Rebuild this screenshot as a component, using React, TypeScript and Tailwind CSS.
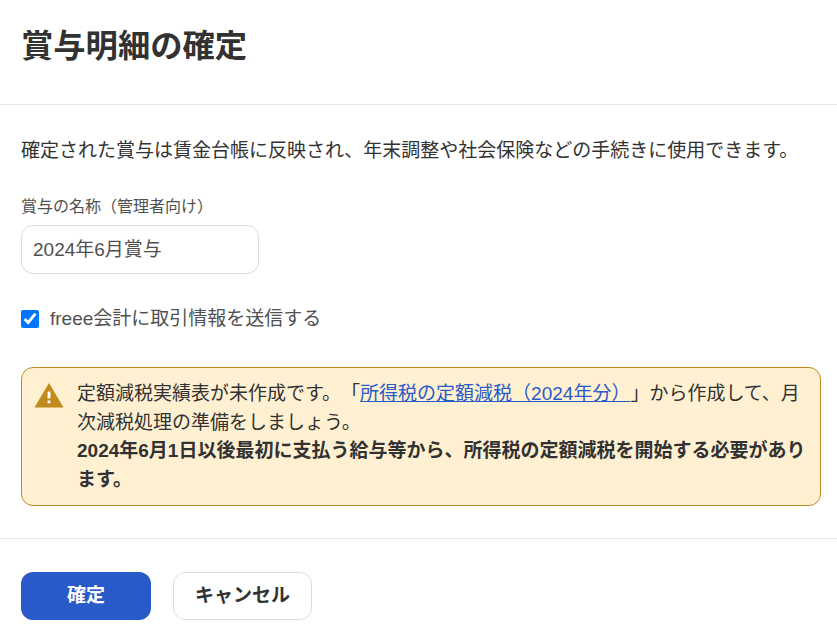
const FONT = "font-['Liberation_Sans','Noto_Sans_CJK_JP',sans-serif]";

const App = () => {
  return (
    <div className={`${FONT} h-[638px] w-[837px] overflow-hidden bg-white text-[#323232] [text-spacing-trim:space-all]`}>
      <div className="flex h-[105px] items-start border-b border-[#e8e8e8] px-[21px] pt-[22px]">
        <h1 className="text-[32.3px] font-bold leading-[48px]">賞与明細の確定</h1>
      </div>
      <div className="px-[21px] pt-[32px]">
        <p className="text-[19px] leading-[28.5px]">
          確定された賞与は賃金台帳に反映され、年末調整や社会保険などの手続きに使用できます。
        </p>
        <label className="mt-[29px] block text-[16px] leading-[24px] text-[#505050]">
          賞与の名称（管理者向け）
        </label>
        <input
          readOnly
          value="2024年6月賞与"
          className="mt-[6px] block h-[49px] w-[238px] rounded-[12px] border border-[#dcdcdc] px-[11px] pb-[4px] text-[19px] text-[#505050] outline-none"
        />
        <label className="mt-[31px] flex items-center gap-[11px] text-[19px] leading-[28.5px] text-[#505050]">
          <input type="checkbox" readOnly checked className="h-[18px] w-[18px] accent-[#0075ff]" />
          freee会計に取引情報を送信する
        </label>
        <div className="mt-[34px] flex w-[800px] gap-[13px] rounded-[12px] border border-[#c08a20] bg-[#fff0d2] pt-[12px] pb-[11px] pl-[12px] pr-[12px]">
          <svg viewBox="0 0 30 26" className="mt-[2px] h-[26px] w-[30px] shrink-0">
            <path d="M15 1 29.5 25.5H.5Z" fill="#c08a1c" />
            <rect x="13.6" y="9.5" width="2.8" height="7" fill="#fff" />
            <rect x="13.6" y="18.5" width="2.8" height="2.8" fill="#fff" />
          </svg>
          <div className="text-[19px] leading-[28.5px]">
            <p>
              定額減税実績表が未作成です。「
              <a className="text-[#285ac8] underline">所得税の定額減税（2024年分）</a>
              」から作成して、月<br />次減税処理の準備をしましょう。
            </p>
            <p className="font-bold">
              2024年6月1日以後最初に支払う給与等から、所得税の定額減税を開始する必要があり<br />ます。
            </p>
          </div>
        </div>
      </div>
      <div className="mt-[32px] flex gap-[22px] border-t border-[#e8e8e8] px-[21px] pt-[33px]">
        <button className="h-[48px] w-[130px] rounded-[12px] bg-[#285ac8] text-[19px] font-bold text-white">確定</button>
        <button className="h-[48px] w-[139px] rounded-[12px] border border-[#dcdcdc] bg-white text-[19px] font-bold">キャンセル</button>
      </div>
    </div>
  );
};

export default App;
